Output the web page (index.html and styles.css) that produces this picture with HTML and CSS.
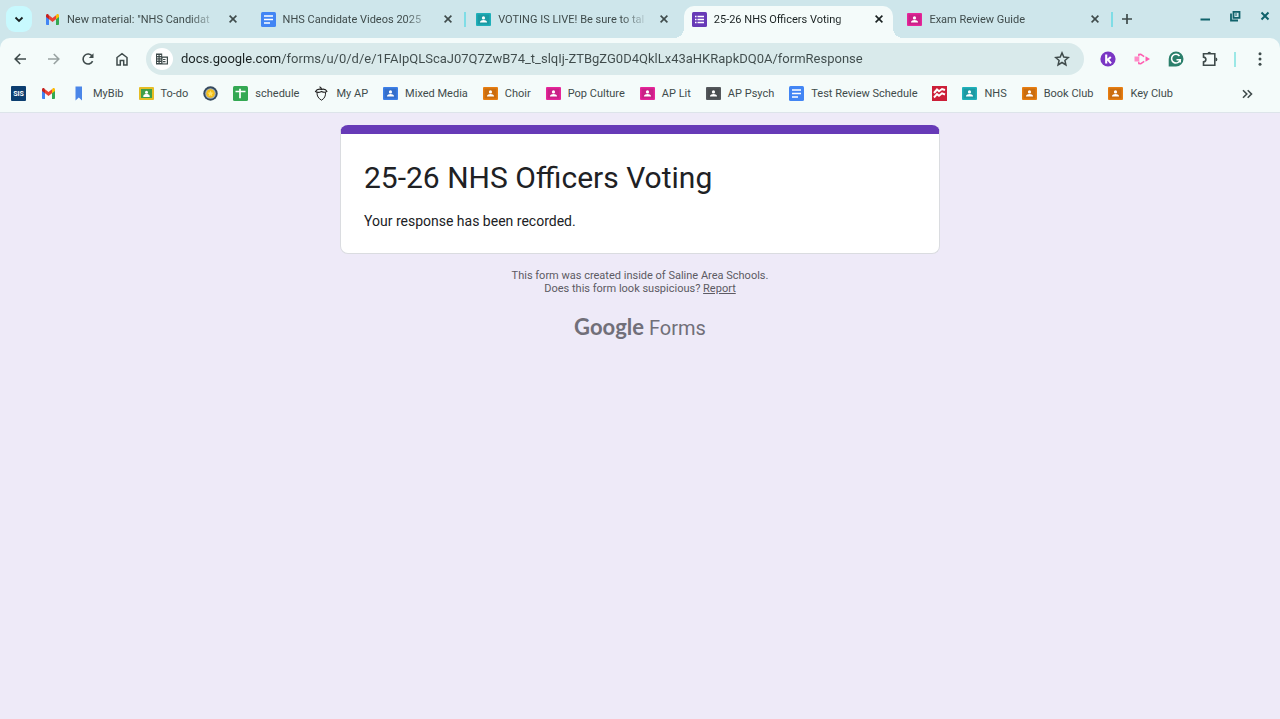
FILE: index.html
```html
<!DOCTYPE html>
<html lang="en">

<head>
    <meta charset="UTF-8">
    <meta name="viewport" content="width=device-width, initial-scale=1.0">
    <title>25-26 NHS Officers Voting</title>
    <link rel="stylesheet" href="styles.css">
</head>

<body>
    <!-- Shared icons -->
    <svg class="sprite" aria-hidden="true">
        <symbol id="i-close" viewBox="0 0 16 16">
            <path d="M4.6 4.6l6.800 6.800M11.400 4.600l-6.800 6.800" fill="none" stroke="currentColor" stroke-width="1.6" />
        </symbol>
        <symbol id="i-class" viewBox="0 0 15 15">
            <rect y="1" width="15" height="13" rx="1" fill="currentColor" />
            <rect x="1.5" y="2.5" width="12" height="10" fill="#000" opacity=".12" />
            <circle cx="7.5" cy="5.9" r="1.6" fill="#fff" />
            <path d="M4 10.6V10c0-1.4 2-2.1 3.5-2.1S11 8.600 11 10v.6z" fill="#fff" />
        </symbol>
        <symbol id="i-doc" viewBox="0 0 15 15">
            <rect width="15" height="15" rx="1.5" fill="#4285f4" />
            <path d="M3 4h9M3 7.500h9M3 11h6" stroke="#fff" stroke-width="1.6" />
        </symbol>
        <symbol id="i-gmail" viewBox="0 0 15 15">
            <path d="M1 4v8.200c0 .5.4.8.9.8H4V6.500z" fill="#4285f4" />
            <path d="M14 4v8.200c0 .5-.4.8-.9.8H11V6.500z" fill="#34a853" />
            <path d="M11 3.200V7.300L14 5V3.600c0-1.500-1.500-1.900-2.400-1.100z" fill="#fbbc04" />
            <path d="M4 7.300V3.200L7.500 5.900 11 3.200v4.100L7.500 10z" fill="#ea4335" />
            <path d="M1 3.600V5l3 2.300V3.200l-.6-.7C2.500 1.700 1 2.100 1 3.600z" fill="#c5221f" />
        </symbol>
    </svg>

    <header class="browser">
        <div class="tab-strip">
            <button class="tab-search" aria-label="Search tabs">
                <svg class="icon" viewBox="0 0 16 16"><path d="M4.500 6.500L8 10l3.500-3.500" fill="none" stroke="currentColor" stroke-width="1.800" /></svg>
            </button>
            <div class="tabs">
                <div class="tab">
                    <div class="tab-body">
                        <svg class="favicon"><use href="#i-gmail" /></svg>
                        <span class="tab-title">New material: "NHS Candidat</span>
                        <button class="tab-close" aria-label="Close tab"><svg class="icon"><use href="#i-close" /></svg></button>
                    </div>
                </div>
                <div class="tab tab-divided">
                    <div class="tab-body">
                        <svg class="favicon"><use href="#i-doc" /></svg>
                        <span class="tab-title">NHS Candidate Videos 2025</span>
                        <button class="tab-close" aria-label="Close tab"><svg class="icon"><use href="#i-close" /></svg></button>
                    </div>
                </div>
                <div class="tab">
                    <div class="tab-body">
                        <svg class="favicon teal"><use href="#i-class" /></svg>
                        <span class="tab-title">VOTING IS LIVE! Be sure to tal</span>
                        <button class="tab-close" aria-label="Close tab"><svg class="icon"><use href="#i-close" /></svg></button>
                    </div>
                </div>
                <div class="tab tab-active">
                    <div class="tab-body">
                        <svg class="favicon" viewBox="0 0 15 15">
                            <rect width="15" height="15" rx="1.500" fill="#673ab7" />
                            <path d="M5.500 4.500H12M5.500 7.500H12M5.500 10.500H12M3 4.500h1.500M3 7.500h1.500M3 10.500h1.500" stroke="#fff" stroke-width="1.500" />
                        </svg>
                        <span class="tab-title">25-26 NHS Officers Voting</span>
                        <button class="tab-close" aria-label="Close tab"><svg class="icon"><use href="#i-close" /></svg></button>
                    </div>
                </div>
                <div class="tab tab-divided">
                    <div class="tab-body">
                        <svg class="favicon pink"><use href="#i-class" /></svg>
                        <span class="tab-title">Exam Review Guide</span>
                        <button class="tab-close" aria-label="Close tab"><svg class="icon"><use href="#i-close" /></svg></button>
                    </div>
                </div>
            </div>
            <button class="new-tab" aria-label="New tab">
                <svg class="icon" viewBox="0 0 16 16"><path d="M8 3v10M3 8h10" stroke="currentColor" stroke-width="1.700" /></svg>
            </button>
            <div class="window-controls">
                <button aria-label="Minimize"><svg class="icon" viewBox="0 0 16 16"><path d="M3.500 11.500h9.500" stroke="currentColor" stroke-width="2" /></svg></button>
                <button aria-label="Restore">
                    <svg class="icon" viewBox="0 0 16 16" fill="none" stroke="currentColor" stroke-width="1.800"><path d="M6.500 3.900h6v6h-6zM4 5.500v7h7" /><path d="M9 5v3" stroke-width="1" /></svg>
                </button>
                <button aria-label="Close window"><svg class="icon" viewBox="0 0 16 16"><path d="M4.500 4.500l7 7M11.500 4.500l-7 7" stroke="currentColor" stroke-width="2" /></svg></button>
            </div>
        </div>

        <div class="toolbar">
            <button class="tool" aria-label="Back"><svg class="icon" viewBox="0 0 16 16"><path d="M14 8H3.500M8.200 3L3.200 8l5 5" fill="none" stroke="currentColor" stroke-width="1.600" /></svg></button>
            <button class="tool" aria-label="Forward" disabled><svg class="icon" viewBox="0 0 16 16"><path d="M2 8h10.500M7.800 3l5 5-5 5" fill="none" stroke="currentColor" stroke-width="1.600" /></svg></button>
            <button class="tool" aria-label="Reload"><svg class="icon" viewBox="0 0 16 16"><path d="M12.600 10.200A5 5 0 1 1 12.200 5.200" fill="none" stroke="currentColor" stroke-width="1.600" /><path d="M13.500 2.300v4.700H8.800z" fill="currentColor" /></svg></button>
            <button class="tool" aria-label="Home"><svg class="icon" viewBox="0 0 16 16"><path d="M3 14V6.500L8 2.600l5 3.900V14H9.700V9.500H6.300V14z" fill="none" stroke="currentColor" stroke-width="1.500" /></svg></button>

            <div class="omnibox">
                <button class="site-info" aria-label="View site information">
                    <svg class="icon" viewBox="0 0 16 16">
                        <path d="M2 2.500h6.200v3H14v8H2z" fill="currentColor" />
                        <path d="M3 4.500h4.200M3 6.800h4.200M3 9.100h4.200M3 11.500h4.200" stroke="#fff" stroke-width="1" stroke-dasharray="1.500 1.200" />
                        <path d="M8.500 6.800h4.300v5.600H8.500z" fill="#fff" />
                        <path d="M9 8.500h2.500M9 10.700h2.500" stroke="currentColor" stroke-width="1.200" />
                    </svg>
                </button>
                <input class="url" type="text" aria-label="Address" value="docs.google.com/forms/u/0/d/e/1FAIpQLScaJ07Q7ZwB74_t_slqIj-ZTBgZG0D4QklLx43aHKRapkDQ0A/formResponse">
                <button class="bookmark-star" aria-label="Bookmark this tab"><svg class="icon" viewBox="0 0 16 16"><path d="M8 1.900l1.800 4.200 4.500.4-3.400 3 1 4.400L8 11.500l-3.900 2.400 1-4.400-3.400-3 4.500-.4z" fill="none" stroke="currentColor" stroke-width="1.500" /></svg></button>
            </div>

            <button class="tool" aria-label="Kami">
                <svg class="icon" viewBox="0 0 16 16"><circle cx="8" cy="8" r="7.600" fill="#7a36c4" /><path d="M6.200 3.500v9M10.800 6L7 9.300M7.800 8.400l3.200 4" fill="none" stroke="#fff" stroke-width="2.100" /></svg>
            </button>
            <button class="tool" aria-label="Screencastify">
                <svg class="icon" viewBox="0 0 16 16"><path d="M4.800 5.300V3.500l2-.2 3.400 2.300M4.800 10.700v1.800l2 .2 3.400-2.300" fill="none" stroke="#ff5cb0" stroke-width="1.400" /><path d="M.5 5.500h4.800v5H.5z" fill="#ff8cc8" /><path d="M11.500 5.300L16 8l-4.500 2.700z" fill="#ff5cb0" /></svg>
            </button>
            <button class="tool" aria-label="Grammarly">
                <svg class="icon" viewBox="0 0 16 16"><path d="M8 .500a7.500 7.500 0 1 1 0 15H.7V8A7.400 7.400 0 0 1 8 .500z" fill="#2b7f6b" /><path d="M11.500 5A4.400 4.400 0 1 0 12.200 8.700H8.500M12.200 8.500v3" fill="none" stroke="#fff" stroke-width="1.600" /></svg>
            </button>
            <button class="tool" aria-label="Extensions">
                <svg class="icon" viewBox="0 0 16 16"><path d="M1.500 2.800h11.300v11.400H1.500v-3.300c3.200-.3 3.200-4.500 0-4.800z" fill="none" stroke="currentColor" stroke-width="1.600" /><path d="M5.500 2.500a1.800 1.800 0 0 1 3.600 0zM13.500 6.500a1.900 1.900 0 0 1 0 3.800z" fill="currentColor" /></svg>
            </button>
            <span class="toolbar-divider"></span>
            <button class="tool" aria-label="Menu">
                <svg class="icon" viewBox="0 0 16 16" fill="currentColor"><circle cx="8" cy="2.800" r="1.500" /><circle cx="8" cy="8" r="1.500" /><circle cx="8" cy="13.200" r="1.500" /></svg>
            </button>
        </div>

        <nav class="bookmarks">
            <a href="#" class="bookmark" aria-label="SIS">
                <svg class="favicon" viewBox="0 0 15 15"><rect width="15" height="15" rx="1" fill="#0c3e70" /><text x="7.500" y="10" class="sis-text">SIS</text></svg>
            </a>
            <a href="#" class="bookmark" aria-label="Gmail"><svg class="favicon"><use href="#i-gmail" /></svg></a>
            <a href="#" class="bookmark">
                <svg class="favicon" viewBox="0 0 15 15"><path d="M4.500.500h6.500v14L7.800 11.500l-3.300 3z" fill="#4a86e8" /></svg>
                MyBib
            </a>
            <a href="#" class="bookmark">
                <svg class="favicon" viewBox="0 0 15 15"><rect y="1" width="15" height="13" rx="1" fill="#e5bd25" /><rect x="2" y="3" width="11" height="9" fill="#3f9e4a" /><circle cx="7.500" cy="6.200" r="1.500" fill="#fff" /><path d="M4.300 11V10c0-1.300 1.900-1.900 3.200-1.900s3.200.6 3.200 1.900v1z" fill="#fff" /></svg>
                To-do
            </a>
            <a href="#" class="bookmark" aria-label="School site">
                <svg class="favicon" viewBox="0 0 15 15"><circle cx="7.500" cy="7.500" r="7.200" fill="#34495e" /><circle cx="7.500" cy="7.500" r="5.300" fill="#a9b4bb" /><circle cx="7.500" cy="7.500" r="4.300" fill="#f3bd17" /><path d="M7.500 4.600l.9 2 2 .2-1.500 1.400.5 2-1.900-1-1.900 1 .5-2-1.500-1.400 2-.2z" fill="#ffe36b" /></svg>
            </a>
            <a href="#" class="bookmark">
                <svg class="favicon" viewBox="0 0 15 15"><rect width="15" height="15" rx="1.500" fill="#34a853" /><path d="M7 2.800v9.500M2.500 5.500h10" stroke="#fff" stroke-width="1.700" /></svg>
                schedule
            </a>
            <a href="#" class="bookmark">
                <svg class="favicon" viewBox="0 0 15 15" fill="none" stroke="#222"><path d="M3 6.500c-.2 3.500 1.500 6 4.500 7.700 3-1.700 4.300-4.200 4-8" stroke-width="1" /><path d="M1.500 5.500C2.500 3.500 5 2.800 7.500 3.400c2.500-.6 4.500 0 5.500 2-2 1.400-3.500 1-5.500 0-2 1-4 1.500-6 .1zM7.500 3.200C7.300 2 6.800 1.200 5.500.7" stroke-width="1.100" /></svg>
                My AP
            </a>
            <a href="#" class="bookmark"><svg class="favicon blue"><use href="#i-class" /></svg>Mixed Media</a>
            <a href="#" class="bookmark"><svg class="favicon orange"><use href="#i-class" /></svg>Choir</a>
            <a href="#" class="bookmark"><svg class="favicon pink"><use href="#i-class" /></svg>Pop Culture</a>
            <a href="#" class="bookmark"><svg class="favicon pink"><use href="#i-class" /></svg>AP Lit</a>
            <a href="#" class="bookmark"><svg class="favicon gray"><use href="#i-class" /></svg>AP Psych</a>
            <a href="#" class="bookmark"><svg class="favicon"><use href="#i-doc" /></svg>Test Review Schedule</a>
            <a href="#" class="bookmark" aria-label="Textbook">
                <svg class="favicon" viewBox="0 0 15 15"><rect width="15" height="15" fill="#cc1f38" /><path d="M2 7L5 3.500l2 1.700L10 3l3 1M2 11.500l3-3.300 2 1.600 3-2.500 3 1.200" fill="none" stroke="#fff" stroke-width="2" /></svg>
            </a>
            <a href="#" class="bookmark"><svg class="favicon teal"><use href="#i-class" /></svg>NHS</a>
            <a href="#" class="bookmark"><svg class="favicon orange"><use href="#i-class" /></svg>Book Club</a>
            <a href="#" class="bookmark"><svg class="favicon orange"><use href="#i-class" /></svg>Key Club</a>
            <button class="more-bookmarks" aria-label="More bookmarks"><svg class="icon" viewBox="0 0 16 16"><path d="M4 4.200L7.800 8 4 11.800M8.700 4.200L12.500 8l-3.800 3.800" fill="none" stroke="currentColor" stroke-width="1.600" /></svg></button>
        </nav>
    </header>

    <main class="page">
        <section class="card">
            <h1>25-26 NHS Officers Voting</h1>
            <p>Your response has been recorded.</p>
        </section>
        <footer class="form-footer">
            <p>This form was created inside of Saline Area Schools.<br>Does this form look suspicious? <a href="#">Report</a></p>
            <a href="#" class="forms-logo"><span class="logo-google">Google</span><span>Forms</span></a>
        </footer>
    </main>
</body>

</html>
```
FILE: styles.css
```css
:root {
    --strip: #cee6eb;
    --toolbar: #f4fbfa;
    --omnibox: #d9eaeb;
    --text: #3f4b4b;
    --text-strong: #1a2222;
    --divider: #7fdde6;
    --page: #eeeaf8;
    --purple: #673ab7;
}

* {
    box-sizing: border-box;
}

body {
    margin: 0;
    min-height: 100vh;
    display: flex;
    flex-direction: column;
    background-color: var(--page);
    font-family: Roboto, sans-serif;
    font-size: 11px;
    color: var(--text);
}

button {
    display: flex;
    align-items: center;
    justify-content: center;
    padding: 0;
    border: none;
    background: none;
    color: inherit;
    cursor: pointer;
}

.sprite {
    display: none;
}

.icon {
    display: block;
    width: 16px;
    height: 16px;
    flex-shrink: 0;
}

.favicon {
    display: block;
    width: 15px;
    height: 15px;
    flex-shrink: 0;
}

.teal {
    color: #1fb0ba;
}

.pink {
    color: #e6259a;
}

.orange {
    color: #e77d10;
}

.blue {
    color: #3c7fe8;
}

.gray {
    color: #54585c;
}

/* Tab strip */
.browser {
    background-color: var(--strip);
}

.tab-strip {
    display: flex;
    align-items: center;
    height: 38px;
    padding-left: 6px;
}

.tab-search {
    width: 26px;
    height: 26px;
    border-radius: 9px;
    background-color: #c8f9fe;
    color: var(--text-strong);
}

.tabs {
    display: flex;
    flex: 0 1 1078px;
    min-width: 0;
    align-self: stretch;
    margin-left: 5px;
}

.tab {
    display: flex;
    flex: 1;
    min-width: 0;
    align-items: center;
}

.tab::after {
    content: "";
    width: 2px;
    height: 15px;
    margin: 0 2px;
}

.tab-divided::after {
    background-color: var(--divider);
}

.tab-body {
    display: flex;
    flex: 1;
    min-width: 0;
    align-items: center;
    align-self: flex-end;
    gap: 7px;
    height: 32px;
    padding: 0 6px 6px 8px;
}

.tab-title {
    flex: 1;
    overflow: hidden;
    white-space: nowrap;
    mask-image: linear-gradient(to right, #000 calc(100% - 28px), transparent);
}

.tab-close {
    width: 16px;
    height: 16px;
}

.tab-active .tab-body {
    position: relative;
    background-color: var(--toolbar);
    border-radius: 10px 10px 0 0;
    color: var(--text-strong);
}

/* Curved feet of the active tab */
.tab-active .tab-body::before,
.tab-active .tab-body::after {
    content: "";
    position: absolute;
    bottom: 0;
    width: 10px;
    height: 10px;
}

.tab-active .tab-body::before {
    right: 100%;
    background: radial-gradient(circle at 0 0, transparent 10px, var(--toolbar) 10px);
}

.tab-active .tab-body::after {
    left: 100%;
    background: radial-gradient(circle at 100% 0, transparent 10px, var(--toolbar) 10px);
}

.new-tab {
    width: 24px;
    height: 24px;
}

.window-controls {
    display: flex;
    margin-left: auto;
    padding-bottom: 6px;
    color: #10626b;
}

.window-controls button {
    width: 30px;
    height: 24px;
}

/* Toolbar */
.toolbar {
    display: flex;
    align-items: center;
    gap: 2px;
    height: 42px;
    padding: 0 4px;
    background-color: var(--toolbar);
    border-radius: 10px 10px 0 0;
}

.tool {
    width: 32px;
    height: 32px;
    flex-shrink: 0;
}

.tool:disabled {
    opacity: 0.5;
}

.omnibox {
    display: flex;
    flex: 1;
    min-width: 0;
    align-items: center;
    height: 32px;
    margin: 0 6px;
    padding: 0 14px 0 5px;
    border-radius: 16px;
    background-color: var(--omnibox);
}

.site-info {
    width: 22px;
    height: 22px;
    border-radius: 50%;
    background-color: #fff;
}

/* The domain part of the address is darker than the path */
.url {
    flex: 1;
    min-width: 0;
    margin-left: 8px;
    padding: 0;
    border: none;
    outline: none;
    background: linear-gradient(to right, var(--text-strong) 101px, var(--text) 101px);
    background-clip: text;
    color: transparent;
    font-family: inherit;
    font-size: 13px;
    line-height: 20px;
}

.toolbar-divider {
    width: 2px;
    height: 15px;
    margin: 0 6px;
    background-color: #9be8e6;
}

/* Bookmarks bar */
.bookmarks {
    display: flex;
    align-items: center;
    gap: 15px;
    height: 33px;
    padding: 0 25px 5px 11px;
    background-color: var(--toolbar);
    border-bottom: 1px solid #dde4ea;
}

.bookmark {
    display: flex;
    align-items: center;
    gap: 7px;
    color: inherit;
    text-decoration: none;
    white-space: nowrap;
}

.sis-text {
    fill: #fff;
    font-size: 7px;
    font-weight: 700;
    text-anchor: middle;
}

.more-bookmarks {
    margin-left: auto;
}

/* Form confirmation */
.page {
    flex: 1;
    padding: 12px 16px;
}

.card {
    max-width: 600px;
    margin: 0 auto;
    padding: 24px 23px 22px;
    background-color: #fff;
    border: 1px solid #dadce0;
    border-top: 9px solid var(--purple);
    border-radius: 8px;
    color: #202124;
}

.card h1 {
    margin: 0;
    font-size: 30px;
    font-weight: 400;
    line-height: 40px;
}

.card p {
    margin: 13px 0 0;
    font-size: 14px;
    line-height: 20px;
}

.form-footer {
    display: flex;
    flex-direction: column;
    align-items: center;
    margin-top: 15px;
    color: #5c5a63;
    text-align: center;
}

.form-footer p {
    margin: 0;
    line-height: 13px;
}

.form-footer a {
    color: inherit;
}

.form-footer .forms-logo {
    display: flex;
    align-items: baseline;
    gap: 5px;
    margin-top: 18px;
    color: #716f79;
    font-size: 20px;
    line-height: 28px;
    text-decoration: none;
}

.logo-google {
    font-family: Lato, sans-serif;
    font-size: 22px;
    font-weight: 700;
}
```
